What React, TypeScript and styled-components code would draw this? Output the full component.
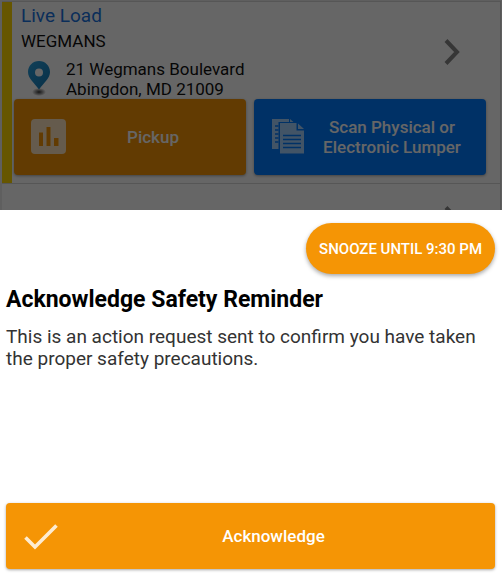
import React from "react";
import styled, { createGlobalStyle } from "styled-components";

const GlobalStyle = createGlobalStyle`
  *, *::before, *::after { box-sizing: border-box; }
  body { margin: 0; font-family: Roboto, sans-serif; background: #fff; }
  h1, h2, p, address { margin: 0; }
  button { font-family: inherit; border: 0; cursor: pointer; }
`;

const Screen = styled.div`
  position: relative;
  height: 100vh;
  overflow: hidden;
`;

const StopList = styled.main`
  display: flex;
  flex-direction: column;
  padding: 1px 1px 0 2px;
  background: #eee;
`;

const StopCard = styled.article`
  display: grid;
  grid-template-columns: 10px 1fr;
  border-top: 1px solid #d8d8d8;
  border-right: 1px solid #d8d8d8;
  background: #fff;
`;

const StatusStripe = styled.div<{ $color: string }>`
  background: ${(p) => p.$color};
`;

const StopBody = styled.div<{ $top: number }>`
  padding: ${(p) => p.$top}px 14px 8px 2px;
`;

const StopHeader = styled.div`
  display: flex;
  align-items: center;
  justify-content: space-between;
  padding: 0 25px 0 7px;
`;

const StopInfo = styled.div`
  display: flex;
  flex-direction: column;
`;

const LoadLink = styled.a`
  font-size: 19px;
  line-height: 22px;
  color: #1a73e0;
  text-decoration: none;
`;

const Customer = styled.h2`
  margin-top: 2px;
  font-size: 17px;
  line-height: 24px;
  font-weight: 400;
  color: #111;
`;

const AddressRow = styled.div`
  display: flex;
  align-items: center;
  gap: 14px;
  padding: 6px 0 0 5px;
`;

const Address = styled.address`
  font-style: normal;
  font-size: 17px;
  line-height: 20px;
  color: #111;
`;

const Actions = styled.div`
  display: grid;
  grid-template-columns: 1fr 1fr;
  gap: 8px;
`;

const ActionButton = styled.button<{ $color: string; $height: number }>`
  display: flex;
  align-items: center;
  gap: 10px;
  width: 100%;
  height: ${(p) => p.$height}px;
  padding: 0 17px;
  border-radius: 4px;
  background: ${(p) => p.$color};
  color: #fff;
  font-size: 17px;
  line-height: 20px;
  font-weight: 500;
  box-shadow: 0 1px 3px rgba(0, 0, 0, 0.35);

  svg { flex: none; }
`;

const ActionLabel = styled.span`
  flex: 1;
  text-align: center;
`;

const Scrim = styled.div`
  position: absolute;
  inset: 0;
  background: rgba(0, 0, 0, 0.6);
`;

const Sheet = styled.section`
  position: absolute;
  inset: auto 0 0;
  display: flex;
  flex-direction: column;
  padding: 13px 7px 4px 6px;
  background: #fff;
`;

const SnoozeButton = styled.button`
  align-self: flex-end;
  height: 51px;
  padding: 0 13px;
  border-radius: 26px;
  background: #f59505;
  color: #fff;
  font-size: 15px;
  font-weight: 500;
  box-shadow: 0 2px 4px rgba(0, 0, 0, 0.35);
`;

const Title = styled.h1`
  margin-top: 12px;
  font-size: 23px;
  line-height: 28px;
  font-weight: 700;
  color: #000;
`;

const Message = styled.p`
  margin-top: 12px;
  min-height: 177px;
  font-size: 19px;
  line-height: 22px;
  color: #333;
`;

const Chevron = () => (
  <svg width="18" height="28" viewBox="0 0 18 28" fill="none" stroke="#888" strokeWidth="4" aria-hidden="true">
    <path d="M3 2.500L14 14L3 25.500" />
  </svg>
);

const Pin = () => (
  <svg width="26" height="36" viewBox="0 0 26 36" aria-hidden="true">
    <defs>
      <radialGradient id="pinShadow">
        <stop offset="0" stopColor="#222" stopOpacity="0.9" />
        <stop offset="1" stopColor="#222" stopOpacity="0" />
      </radialGradient>
      <linearGradient id="pinFill" x1="0" y1="0" x2="1" y2="1">
        <stop offset="0" stopColor="#2a9fdc" />
        <stop offset="1" stopColor="#1579b4" />
      </linearGradient>
    </defs>
    <ellipse cx="13" cy="31" rx="7" ry="4" fill="url(#pinShadow)" />
    <path
      fill="url(#pinFill)"
      fillRule="evenodd"
      d="M13 0C6.800 0 2 4.800 2 11c0 6.500 6 10.500 11 17.500C18 21.500 24 17.500 24 11 24 4.800 19.200 0 13 0zm0 7.500a4 4 0 1 1 0 8 4 4 0 0 1 0-8z"
    />
  </svg>
);

const BarsIcon = () => (
  <svg width="36" height="36" viewBox="0 0 36 36" aria-hidden="true">
    <path
      fill="#fff"
      fillOpacity="0.75"
      fillRule="evenodd"
      d="M4 0h27a4 4 0 0 1 4 4v27a4 4 0 0 1-4 4H4a4 4 0 0 1-4-4V4a4 4 0 0 1 4-4zM8 13.500V27h4V13.500zM15.500 8v19h4V8zM23 19v8h4.500v-8z"
    />
  </svg>
);

const DocsIcon = () => (
  <svg width="34" height="36" viewBox="0 0 34 36" aria-hidden="true">
    <g fill="#fff" fillOpacity="0.65">
      <path d="M1 0h17v3H7.500v27H1zM19 0l3.500 3H19z" />
      <path d="M9 4h16.500v7.500H33V34.500H9z" />
      <path d="M27 4.500L33 10h-6z" />
    </g>
    <g stroke="#007bff" strokeWidth="1.400">
      <path d="M4 7h3.500M4 11h3.500M4 15h3.500M4 19h3.500M4 23h3.500" />
      <path d="M12 16.500h18M12 20.500h18M12 24.500h18M12 28.500h18" />
    </g>
  </svg>
);

const CheckIcon = () => (
  <svg width="36" height="28" viewBox="0 0 36 28" fill="none" stroke="#fff" strokeOpacity="0.82" strokeWidth="3.600" aria-hidden="true">
    <path d="M2.500 15.500L12 25L33.500 3.500" />
  </svg>
);

export default function App() {
  return (
    <Screen>
      <GlobalStyle />
      <StopList inert>
        <StopCard>
          <StatusStripe $color="#ffd800" />
          <StopBody $top={3}>
            <StopHeader>
              <StopInfo>
                <LoadLink href="#live-load">Live Load</LoadLink>
                <Customer>WEGMANS</Customer>
                <AddressRow>
                  <Pin />
                  <Address>
                    21 Wegmans Boulevard
                    <br />
                    Abingdon, MD 21009
                  </Address>
                </AddressRow>
              </StopInfo>
              <Chevron />
            </StopHeader>
            <Actions>
              <ActionButton $color="#f59505" $height={76}>
                <BarsIcon />
                <ActionLabel>Pickup</ActionLabel>
              </ActionButton>
              <ActionButton $color="#007bff" $height={76}>
                <DocsIcon />
                <ActionLabel>
                  Scan Physical or
                  <br />
                  Electronic Lumper
                </ActionLabel>
              </ActionButton>
            </Actions>
          </StopBody>
        </StopCard>
        <StopCard>
          <StatusStripe $color="#fff" />
          <StopBody $top={21}>
            <StopHeader>
              <StopInfo />
              <Chevron />
            </StopHeader>
          </StopBody>
        </StopCard>
      </StopList>
      <Scrim />
      <Sheet role="dialog" aria-modal="true" aria-labelledby="reminder-title">
        <SnoozeButton>SNOOZE UNTIL 9:30 PM</SnoozeButton>
        <Title id="reminder-title">Acknowledge Safety Reminder</Title>
        <Message>
          This is an action request sent to confirm you have taken the proper safety precautions.
        </Message>
        <ActionButton $color="#f59505" $height={66}>
          <CheckIcon />
          <ActionLabel>Acknowledge</ActionLabel>
        </ActionButton>
      </Sheet>
    </Screen>
  );
}
